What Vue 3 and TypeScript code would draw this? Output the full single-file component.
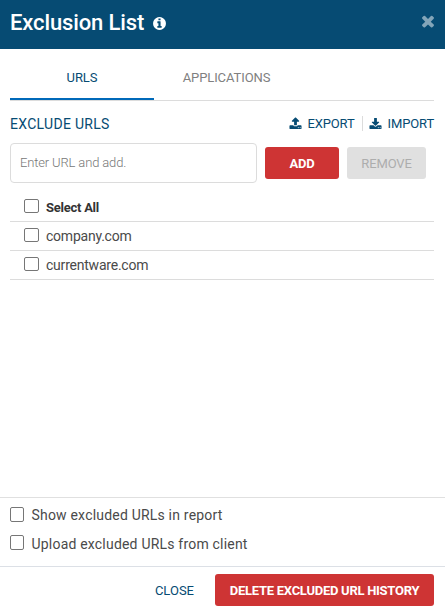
<script setup lang="ts">
import { ref } from 'vue'

interface Entry {
  name: string
  checked: boolean
}

const tabs: string[] = ['URLS', 'APPLICATIONS']
const activeTab = ref<string>('URLS')
const newUrl = ref<string>('')
const selectAll = ref<boolean>(false)
const entries = ref<Entry[]>([
  { name: 'company.com', checked: false },
  { name: 'currentware.com', checked: false },
])
const showInReport = ref<boolean>(false)
const uploadFromClient = ref<boolean>(false)

function toggleAll(): void {
  entries.value.forEach((e) => (e.checked = selectAll.value))
}

function addUrl(): void {
  const name = newUrl.value.trim()
  if (name) entries.value.push({ name, checked: false })
  newUrl.value = ''
}
</script>

<template>
  <div class="dialog">
    <header class="header">
      <h1 class="title">Exclusion List</h1>
      <svg class="info" viewBox="0 0 1792 1792"><path d="M1152 1376v-160q0-14-9-23t-23-9h-96v-512q0-14-9-23t-23-9h-320q-14 0-23 9t-9 23v160q0 14 9 23t23 9h96v320h-96q-14 0-23 9t-9 23v160q0 14 9 23t23 9h448q14 0 23-9t9-23zm-128-896v-160q0-14-9-23t-23-9h-192q-14 0-23 9t-9 23v160q0 14 9 23t23 9h192q14 0 23-9t9-23zm640 416q0 209-103 385.5t-279.5 279.5-385.5 103-385.5-103-279.5-279.5-103-385.5 103-385.5 279.5-279.5 385.5-103 385.5 103 279.5 279.5 103 385.5z" /></svg>
      <svg class="dismiss" viewBox="0 0 1792 1792"><path d="M1490 1322q0 40-28 68l-136 136q-28 28-68 28t-68-28l-294-294-294 294q-28 28-68 28t-68-28l-136-136q-28-28-28-68t28-68l294-294-294-294q-28-28-28-68t28-68l136-136q28-28 68-28t68 28l294 294 294-294q28-28 68-28t68 28l136 136q28 28 28 68t-28 68l-294 294 294 294q28 28 28 68z" /></svg>
    </header>

    <main class="body">
      <nav class="tabs">
        <button v-for="tab in tabs" :key="tab" class="tab" :class="{ active: tab === activeTab }" @click="activeTab = tab">
          <span>{{ tab }}</span>
        </button>
      </nav>

      <div class="toolbar">
        <h2 class="section">EXCLUDE URLS</h2>
        <button class="link">
          <svg viewBox="0 0 1792 1792"><path d="M1344 1472q0-26-19-45t-45-19-45 19-19 45 19 45 45 19 45-19 19-45zm256 0q0-26-19-45t-45-19-45 19-19 45 19 45 45 19 45-19 19-45zm128-224v320q0 40-28 68t-68 28h-1472q-40 0-68-28t-28-68v-320q0-40 28-68t68-28h427q21 56 70.500 92t110.500 36h256q61 0 110.500-36t70.500-92h427q40 0 68 28t28 68zm-325-648q-17 40-59 40h-256v448q0 26-19 45t-45 19h-256q-26 0-45-19t-19-45v-448h-256q-42 0-59-40-17-39 14-69l448-448q18-19 45-19t45 19l448 448q31 30 14 69z" /></svg>
          <span>EXPORT</span>
        </button>
        <button class="link import">
          <svg viewBox="0 0 1792 1792"><path d="M1344 1472q0-26-19-45t-45-19-45 19-19 45 19 45 45 19 45-19 19-45zm256 0q0-26-19-45t-45-19-45 19-19 45 19 45 45 19 45-19 19-45zm128-224v320q0 40-28 68t-68 28h-1472q-40 0-68-28t-28-68v-320q0-40 28-68t68-28h465l135 136q58 56 136 56t136-56l136-136h464q40 0 68 28t28 68zm-325-569q17 41-14 70l-448 448q-18 19-45 19t-45-19l-448-448q-31-29-14-70 17-39 59-39h256v-448q0-26 19-45t45-19h256q26 0 45 19t19 45v448h256q42 0 59 39z" /></svg>
          <span>IMPORT</span>
        </button>
      </div>

      <form class="entry" @submit.prevent="addUrl">
        <input v-model="newUrl" class="field" type="text" placeholder="Enter URL and add." />
        <button class="btn add" type="submit"><span>ADD</span></button>
        <button class="btn remove" type="button" disabled><span>REMOVE</span></button>
      </form>

      <div class="list">
        <label class="row all">
          <input v-model="selectAll" class="box" type="checkbox" @change="toggleAll" />
          <span>Select All</span>
        </label>
        <label v-for="entry in entries" :key="entry.name" class="row">
          <input v-model="entry.checked" class="box" type="checkbox" />
          <span>{{ entry.name }}</span>
        </label>
      </div>
    </main>

    <section class="options">
      <label class="option">
        <input v-model="showInReport" class="box" type="checkbox" />
        <span>Show excluded URLs in report</span>
      </label>
      <label class="option">
        <input v-model="uploadFromClient" class="box" type="checkbox" />
        <span>Upload excluded URLs from client</span>
      </label>
    </section>

    <footer class="footer">
      <button class="close"><span>CLOSE</span></button>
      <button class="btn delete"><span>DELETE EXCLUDED URL HISTORY</span></button>
    </footer>
  </div>
</template>

<style>
body {
  background: #fff;
  overflow: hidden;
}
</style>

<style scoped>
.dialog,
.dialog * {
  box-sizing: border-box;
}
.dialog {
  display: flex;
  flex-direction: column;
  height: 611px;
  font-family: Roboto, "Liberation Sans", sans-serif;
  font-size: 13px;
  color: #4a4a4a;
}
button {
  font: inherit;
  border: 0;
  padding: 0;
  background: none;
  cursor: pointer;
  white-space: nowrap;
}
svg {
  display: block;
  fill: currentColor;
  flex: none;
}
.header {
  display: flex;
  align-items: center;
  height: 49px;
  padding: 0 8px 4px 10px;
  background: #064b73;
  color: #fff;
}
.title {
  margin: 0;
  font-size: 22px;
  line-height: 26px;
  font-weight: 500;
  letter-spacing: -0.12px;
}
.info {
  width: 15px;
  height: 15px;
  margin-left: 7.5px;
  margin-top: 1px;
}
.dismiss {
  width: 18px;
  height: 18px;
  margin-left: auto;
  margin-top: -3px;
  color: #83a5b9;
}
.body {
  flex: 1;
  padding: 0 11px 0 10px;
}
.tabs {
  display: flex;
  height: 52px;
  border-bottom: 1px solid #dcdcdc;
}
.tab {
  width: 145px;
  height: 51px;
  padding-top: 8px;
  color: #808080;
  letter-spacing: -0.1px;
  border-bottom: 2px solid transparent;
}
.tab.active {
  width: 144px;
  color: #064b73;
  border-bottom-color: #0069b9;
}
.toolbar {
  display: flex;
  align-items: center;
  height: 42px;
  padding-top: 3px;
  color: #064b73;
}
.section {
  margin: 0 auto 0 0;
  font-size: 14px;
  font-weight: 400;
  letter-spacing: 0.3px;
}
.link {
  display: flex;
  align-items: center;
  gap: 5px;
  height: 15px;
  color: inherit;
  letter-spacing: -0.14px;
}
.link svg {
  width: 13px;
  height: 13px;
}
.import {
  gap: 6px;
  margin-left: 7px;
  padding-left: 6px;
  border-left: 1px solid #dcdcdc;
}
.entry {
  display: flex;
  align-items: center;
  height: 40px;
}
.field {
  width: 247px;
  height: 40px;
  margin-right: 8px;
  padding: 0 9px 2px;
  border: 1px solid #dcdcdc;
  border-radius: 4px;
  font: 300 13px Roboto, "Liberation Sans", sans-serif;
  letter-spacing: -0.15px;
  outline: 0;
}
.field::placeholder {
  color: #777;
  opacity: 1;
}
.btn {
  height: 32px;
  border-radius: 3px;
  background: #ce3434;
  color: #fff;
  font-weight: 700;
}
.add {
  width: 74px;
  margin-right: 8px;
  letter-spacing: -0.2px;
}
.remove {
  width: 79px;
  background: #e0e0e0;
  color: #adadad;
  font-weight: 400;
  letter-spacing: -0.15px;
}
.list {
  padding-top: 10px;
}
.row {
  display: flex;
  align-items: center;
  height: 29px;
  padding-left: 14px;
  border-bottom: 1px solid #dcdcdc;
  font-size: 14px;
  letter-spacing: -0.22px;
}
.all span {
  font-size: 13px;
  font-weight: 700;
  color: #333;
  letter-spacing: -0.25px;
}
.box {
  appearance: none;
  flex: none;
  width: 15px;
  height: 14px;
  margin: 0 7px 2px 0;
  border: 1px solid #767676;
  border-radius: 2px;
  background: #fff;
}
.box:checked {
  background: #064b73;
}
.options {
  height: 69px;
  padding: 3px 10px 0;
  border-top: 1px solid #e0e0e0;
}
.option {
  display: flex;
  align-items: center;
  height: 29px;
  font-size: 14px;
  letter-spacing: 0.2px;
}
.option span {
  padding-bottom: 2px;
}
.option .box {
  width: 14px;
  height: 15px;
  margin: 0 7.5px 2px 0;
}
.option + .option .box {
  margin-bottom: 4px;
}
.footer {
  display: flex;
  align-items: center;
  justify-content: flex-end;
  height: 45px;
  padding: 2px 11px 0 0;
  border-top: 1px solid #dce0e6;
}
.close {
  margin-right: 21px;
  color: #064b73;
}
.delete {
  width: 219px;
  letter-spacing: -0.27px;
}
</style>
